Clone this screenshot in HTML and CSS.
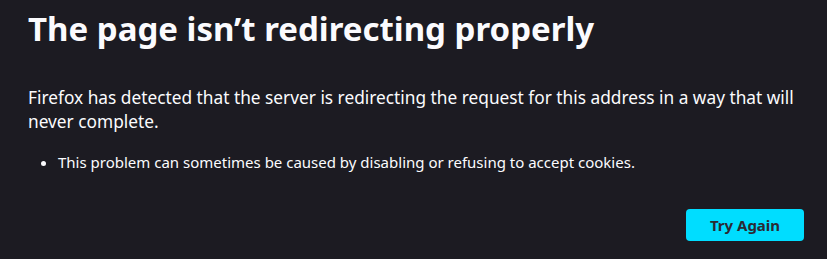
FILE: index.html
```html
<!DOCTYPE html>
<html lang="en">
<head>
<meta charset="UTF-8">
<title>Problem loading page</title>
<link rel="stylesheet" href="styles.css">
</head>
<body>
<main class="error-page">
  <h1 class="title">The page isn’t redirecting properly</h1>
  <p class="intro">Firefox has detected that the server is redirecting the request for this address in a way that will never complete.</p>
  <ul class="reasons">
    <li>This problem can sometimes be caused by disabling or refusing to accept cookies.</li>
  </ul>
  <div class="actions">
    <button class="try-again">Try Again</button>
  </div>
</main>
</body>
</html>
```

FILE: styles.css
```css
body {
  margin: 0;
  background: #1c1b22;
  color: #fbfbfe;
  font-family: "Noto Sans", sans-serif;
}
.error-page {
  padding: 5px 23px 0 28px;
}
.title {
  font-size: 33px;
  font-weight: 700;
  margin: 0 0 33px;
  line-height: 48px;
}
.intro {
  font-size: 17.3px;
  line-height: 24px;
  margin: 0 0 18px;
}
.reasons {
  margin: 0;
  padding-left: 30px;
  font-size: 15px;
  line-height: 20px;
}
.actions {
  display: flex;
  justify-content: flex-end;
  margin-top: 37px;
}
.try-again {
  background: #00ddff;
  color: #2b2a33;
  border: none;
  border-radius: 4px;
  font-family: inherit;
  font-size: 15px;
  font-weight: 700;
  width: 118px;
  height: 32px;
  padding: 0;
  cursor: pointer;
}
```
